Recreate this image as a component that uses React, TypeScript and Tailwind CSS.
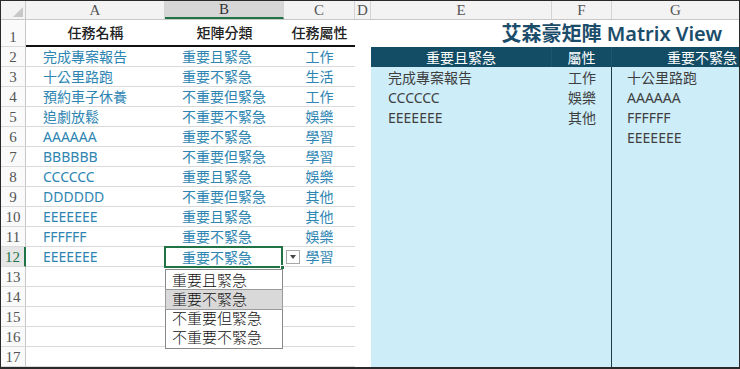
import React from "react";

const FONT = { fontFamily: '"Noto Sans", "Noto Sans CJK TC", sans-serif' };
const SERIF = { fontFamily: '"Liberation Serif", "Noto Sans CJK TC", serif' };

const tasks: [string, string, string][] = [
  ["完成專案報告", "重要且緊急", "工作"],
  ["十公里路跑", "重要不緊急", "生活"],
  ["預約車子休養", "不重要但緊急", "工作"],
  ["追劇放鬆", "不重要不緊急", "娛樂"],
  ["AAAAAA", "重要不緊急", "學習"],
  ["BBBBBB", "不重要但緊急", "學習"],
  ["CCCCCC", "重要且緊急", "娛樂"],
  ["DDDDDD", "不重要但緊急", "其他"],
  ["EEEEEEE", "重要且緊急", "其他"],
  ["FFFFFF", "重要不緊急", "娛樂"],
  ["EEEEEEE", "重要不緊急", "學習"],
];

const urgent: [string, string][] = [
  ["完成專案報告", "工作"],
  ["CCCCCC", "娛樂"],
  ["EEEEEEE", "其他"],
];
const notUrgent = ["十公里路跑", "AAAAAA", "FFFFFF", "EEEEEEE"];

const options = ["重要且緊急", "重要不緊急", "不重要但緊急", "不重要不緊急"];

function RowNum({ n, active }: { n: number; active?: boolean }) {
  return (
    <div
      style={SERIF}
      className={`w-[25px] shrink-0 flex items-end justify-center pb-[1px] text-[15px] leading-none border-b border-[#dadada] ${
        active
          ? "text-[#217346] bg-[#e6e6e6] border-r-2 border-r-[#217346]"
          : "text-[#555] bg-[#fafafa] border-r border-r-[#c8c8c8]"
      }`}
    >
      {n}
    </div>
  );
}

export default function App() {
  return (
    <div
      style={FONT}
      className="w-[740px] h-[369px] bg-white border-t border-l border-r border-b-2 border-[#2a2a2a] overflow-hidden"
    >
      {/* column letters */}
      <div style={SERIF} className="flex h-[19px] bg-[#f3f3f3] text-[15px] text-[#555] border-b border-[#c8c8c8]">
        <div className="w-[25px] shrink-0 relative border-r border-[#c8c8c8]">
          <div className="absolute right-[2px] bottom-[2px] w-0 h-0 border-l-[10px] border-l-transparent border-b-[10px] border-b-[#c8c8c8]" />
        </div>
        <div className="w-[139px] shrink-0 flex items-center justify-center border-r border-[#d4d4d4]">A</div>
        <div className="w-[119px] shrink-0 flex items-center justify-center bg-[#d6d6d6] text-[#333] border-b-2 border-[#217346] border-r border-r-[#d4d4d4]">B</div>
        <div className="w-[71px] shrink-0 flex items-center justify-center border-r border-[#d4d4d4]">C</div>
        <div className="w-[16px] shrink-0 flex items-center justify-center border-r border-[#d4d4d4]">D</div>
        <div className="w-[181px] shrink-0 flex items-center justify-center border-r border-[#d4d4d4]">E</div>
        <div className="w-[60px] shrink-0 flex items-center justify-center border-r border-[#d4d4d4]">F</div>
        <div className="flex-1 flex items-center justify-center">G</div>
      </div>

      {/* row 1 */}
      <div className="flex h-[27px]">
        <RowNum n={1} />
        <div className="w-[329px] shrink-0 flex border-b-2 border-[#111] text-[14px] text-[#222] font-medium">
          <div className="w-[139px] flex items-center justify-center">任務名稱</div>
          <div className="w-[119px] flex items-center justify-center">矩陣分類</div>
          <div className="w-[71px] flex items-center justify-center">任務屬性</div>
        </div>
        <div className="w-[16px] shrink-0" />
        <div className="flex-1 flex items-center justify-end pr-[17px] text-[20px] font-semibold text-[#1b4d6b]">
          艾森豪矩陣 Matrix View
        </div>
      </div>

      {/* rows 2..17 */}
      {Array.from({ length: 16 }).map((_, i) => {
        const n = i + 2;
        const t = tasks[i];
        const isHead = n === 2;
        const u = urgent[n - 3];
        const g = notUrgent[n - 3];
        return (
          <div key={n} className="flex h-[20px]">
            <RowNum n={n} active={n === 12} />
            <div className="w-[329px] shrink-0 flex border-b border-[#dadada] text-[14px] text-[#2e85b2]">
              <div className="w-[139px] flex items-center pl-[17px]">{t ? t[0] : ""}</div>
              <div className="w-[119px] relative flex items-center pl-[17px]">
                {n === 12 ? (
                  <>
                    <div className="absolute -left-[1px] -top-[1px] w-[119px] h-[22px] border-2 border-[#217346] flex items-center pl-[16px]">
                      {t[1]}
                      <div className="absolute -right-[4px] -bottom-[4px] w-[5px] h-[5px] bg-[#217346] border border-white" />
                    </div>
                    <div className="absolute left-[121px] top-[3px] w-[14px] h-[14px] bg-white border border-[#a8a8a8] flex items-center justify-center">
                      <div className="w-0 h-0 border-l-[3px] border-r-[3px] border-t-[4px] border-l-transparent border-r-transparent border-t-[#444]" />
                    </div>
                    <div className="absolute left-0 top-[22px] w-[118px] z-10 bg-white border border-[#8a8a8a] text-[15px] text-[#111] leading-none py-[1px]">
                      {options.map((o, k) => (
                        <div
                          key={o}
                          className={`h-[19px] flex items-center pl-[6px] font-light ${
                            k === 1 ? "bg-[#d9d9d9] outline outline-1 outline-[#9a9a9a]" : ""
                          }`}
                        >
                          {o}
                        </div>
                      ))}
                    </div>
                  </>
                ) : t ? (
                  t[1]
                ) : (
                  ""
                )}
              </div>
              <div className="w-[71px] flex items-center justify-center">{t ? t[2] : ""}</div>
            </div>
            <div className="w-[16px] shrink-0" />
            {isHead ? (
              <div className="flex-1 flex bg-[#124d65] text-white text-[14px]">
                <div className="w-[181px] flex items-center justify-center border-r border-[#1c5770]">重要且緊急</div>
                <div className="w-[60px] flex items-center justify-center border-r border-[#1c5770]">屬性</div>
                <div className="flex-1 flex items-center justify-end pr-[2px] whitespace-nowrap">重要不緊急</div>
              </div>
            ) : (
              <div className="flex-1 flex bg-[#cdedf9] text-[14px] text-[#3f3f3f]">
                <div className="w-[181px] flex items-center pl-[17px]">{u ? u[0] : ""}</div>
                <div className="w-[60px] flex items-center justify-end pr-[15px] border-r border-[#1d3a46]">
                  {u ? u[1] : ""}
                </div>
                <div className="flex-1 flex items-center pl-[15px]">{g || ""}</div>
              </div>
            )}
          </div>
        );
      })}
    </div>
  );
}
